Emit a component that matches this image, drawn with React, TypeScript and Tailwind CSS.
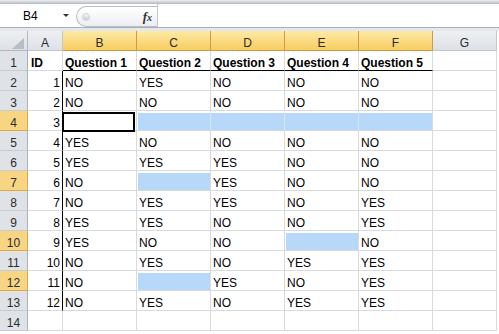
import React from 'react'

const colWidths = ['w-[35px]', 'w-[74px]', 'w-[74px]', 'w-[74px]', 'w-[74px]', 'w-[74px]', 'w-[64px]']
const letters = ['A', 'B', 'C', 'D', 'E', 'F', 'G']
const selectedCols = [1, 2, 3, 4, 5]
const selectedRows = [4, 7, 10, 12]

// '#' = part of the blue multi-selection, '@' = active cell
const rows: string[][] = [
  ['ID', 'Question 1', 'Question 2', 'Question 3', 'Question 4', 'Question 5', ''],
  ['1', 'NO', 'YES', 'NO', 'NO', 'NO', ''],
  ['2', 'NO', 'NO', 'NO', 'NO', 'NO', ''],
  ['3', '@', '#', '#', '#', '#', ''],
  ['4', 'YES', 'NO', 'NO', 'NO', 'NO', ''],
  ['5', 'YES', 'YES', 'YES', 'NO', 'NO', ''],
  ['6', 'NO', '#', 'YES', 'NO', 'NO', ''],
  ['7', 'NO', 'YES', 'YES', 'NO', 'YES', ''],
  ['8', 'YES', 'YES', 'NO', 'NO', 'YES', ''],
  ['9', 'YES', 'NO', 'NO', '#', 'NO', ''],
  ['10', 'NO', 'YES', 'NO', 'YES', 'YES', ''],
  ['11', 'NO', '#', 'YES', 'NO', 'YES', ''],
  ['12', 'NO', 'YES', 'NO', 'YES', 'YES', ''],
  ['', '', '', '', '', '', ''],
]

function FormulaBar() {
  return (
    <div className="flex flex-col">
      <div className="h-[4px] bg-gradient-to-b from-[#eef0f2] to-[#b4b9bf]" />
      <div className="flex h-[23px] bg-white">
        <div className="flex w-[76px] items-center pl-[23px] text-[12px] leading-[14px] text-black">
          <span>B4</span>
          <span className="ml-auto mr-[7px] h-0 w-0 border-x-[3px] border-t-[3px] border-x-transparent border-t-[#333]" />
        </div>
        <div className="mt-[2px] flex w-[81px] items-center rounded-l-full border border-r-0 border-[#b9bec4] bg-gradient-to-b from-white to-[#eceef1]">
          <span className="ml-[5px] h-[8px] w-[8px] rounded-full bg-gradient-to-b from-[#f4f5f6] to-[#c9cdd2] border border-[#cfd3d8]" />
          <span className="ml-auto mr-[5px] font-['Liberation_Serif',serif] text-[13px] font-bold italic leading-none text-[#333]">
            f<span className="text-[10px]">x</span>
          </span>
        </div>
        <div className="w-px bg-[#c3c7cc]" />
        <div className="flex-1 bg-white" />
      </div>
      <div className="h-px bg-[#a9b0b8]" />
      <div className="h-[3px] bg-[#e4e7eb]" />
    </div>
  )
}

function HeaderRow() {
  return (
    <div className="flex h-[20px]">
      <div className="flex w-[28px] items-end justify-end border-r border-b border-[#b3b9c0] bg-gradient-to-b from-[#eef0f2] to-[#dde1e6] pb-[1px] pr-[3px]">
        <svg width="12" height="11" viewBox="0 0 12 11">
          <polygon points="12,0 12,11 0,11" fill="#b8bec5" />
        </svg>
      </div>
      {letters.map((l, i) => {
        const sel = selectedCols.includes(i)
        return (
          <div
            key={l}
            className={[
              colWidths[i],
              'flex items-end justify-center border-r border-b text-[12px] leading-[14px] text-[#2b2b2b]',
              sel
                ? 'border-[#d09a4c] bg-gradient-to-b from-[#fdeaa4] to-[#f7cd5e]'
                : 'border-[#c2c7cd] bg-gradient-to-b from-[#eef0f2] to-[#dde1e6]',
            ].join(' ')}
          >
            {l}
          </div>
        )
      })}
    </div>
  )
}

function DataRow({ cells, n }: { cells: string[]; n: number }) {
  const rowSel = selectedRows.includes(n)
  return (
    <div className="flex h-[20px]">
      <div
        className={[
          'flex w-[28px] items-end justify-center border-r border-b text-[12px] leading-[14px] text-[#2b2b2b]',
          rowSel ? 'border-[#e1a744] bg-[#f8d582]' : 'border-r-[#a9b0b8] border-b-[#c7ccd2] bg-[#dfe3e8]',
        ].join(' ')}
      >
        {n}
      </div>
      {cells.map((c, i) => {
        const blackBottom = n === 1 && i >= 1 && i <= 5
        const blackRight = i === 0 && n >= 2 && n <= 13
        const isBlue = c === '#'
        const isActive = c === '@'
        // blue cells inside the row-4 range run together, gridline shows faintly
        const inRange = isBlue && cells[i + 1] === '#'
        return (
          <div
            key={i}
            className={[
              colWidths[i],
              'relative flex items-end whitespace-nowrap border-r border-b text-[12px] leading-[14px] text-black',
              blackRight ? 'border-r-black' : inRange ? 'border-r-[#d3e5f8]' : 'border-r-[#d9dadb]',
              blackBottom ? 'border-b-black' : 'border-b-[#d9dadb]',
              n === 1 ? 'font-bold' : '',
              i === 0 && n !== 1 ? 'justify-end pr-[2px]' : isBlue ? '' : 'pl-[2px]',
              n === 1 && i === 0 ? 'pl-[3px]' : '',
            ].join(' ')}
          >
            {isBlue && (
              <div className={['h-[17px] flex-1 bg-[#b8d8f9]', cells[i - 1] === '#' ? '' : 'ml-px'].join(' ')} />
            )}
            {isActive && (
              <div className="absolute -bottom-[2px] -left-[1px] right-[1px] top-[1px] border-2 border-black" />
            )}
            {!isBlue && !isActive && c}
          </div>
        )
      })}
    </div>
  )
}

export default function App() {
  return (
    <div className="h-[334px] w-[499px] overflow-hidden bg-white font-['Liberation_Sans',Arial,sans-serif]">
      <FormulaBar />
      <HeaderRow />
      {rows.map((r, idx) => (
        <DataRow key={idx} cells={r} n={idx + 1} />
      ))}
    </div>
  )
}
